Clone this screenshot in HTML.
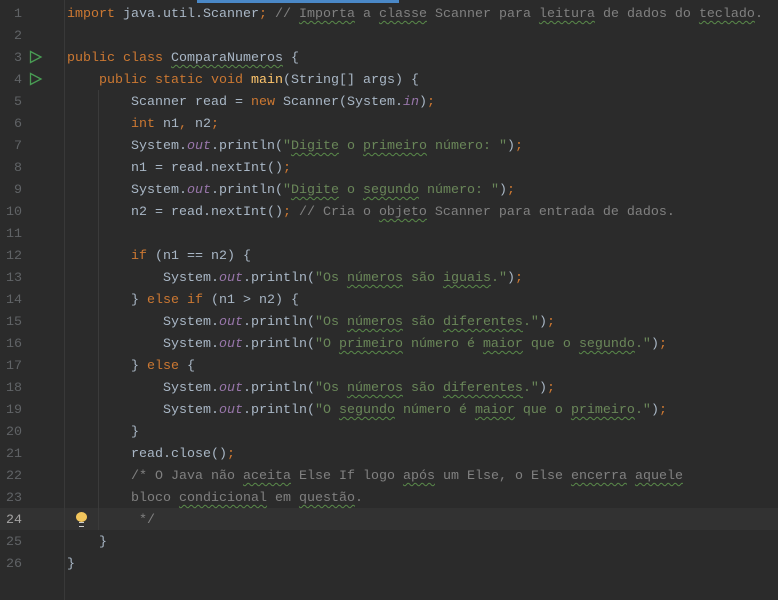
<!DOCTYPE html>
<html><head><meta charset="utf-8"><style>
body{margin:0;width:778px;height:600px;background:#2b2b2b;overflow:hidden;position:relative;font-family:"Liberation Mono",monospace;font-size:13.33px;color:#a9b7c6}
.bar{position:absolute;left:197px;top:0;width:202px;height:3px;background:#4a88c7}
.sep{position:absolute;left:64px;top:0;width:1px;height:600px;background:#393939}
.cur{position:absolute;left:0;top:508px;width:778px;height:22px;background:#323232}
.guide{position:absolute;width:1px;background:#3b3b3b}
.ln{position:absolute;left:0;width:22px;text-align:right;color:#606366;height:22px;line-height:22px}
.code{position:absolute;left:67px;top:4px;white-space:pre;line-height:22px}
.k{color:#cc7832}.s{color:#6a8759}.c{color:#808080}.o{color:#9876aa;font-style:italic}.m{color:#ffc66d}
.w{text-decoration:underline wavy #5a8a4a;text-decoration-thickness:1px;text-underline-offset:3px}
.run{position:absolute;left:29px}
.bulb{position:absolute;left:76px;top:512px;width:11px;height:10px;border-radius:50%;background:#f2c55c}
.bulb::after{content:"";position:absolute;left:3px;top:10px;width:5px;height:3px;border-top:1px solid #ccc;border-bottom:1px solid #ccc}
</style></head><body>
<div class="cur"></div>
<div class="bar"></div>
<div class="sep"></div>
<div class="guide" style="left:98px;top:90px;height:440px"></div>
<div style="position:absolute;top:2px;left:0">
<div class="ln" style="top:2px">1</div><div class="ln" style="top:24px">2</div><div class="ln" style="top:46px">3</div><div class="ln" style="top:68px">4</div><div class="ln" style="top:90px">5</div><div class="ln" style="top:112px">6</div><div class="ln" style="top:134px">7</div><div class="ln" style="top:156px">8</div><div class="ln" style="top:178px">9</div><div class="ln" style="top:200px">10</div><div class="ln" style="top:222px">11</div><div class="ln" style="top:244px">12</div><div class="ln" style="top:266px">13</div><div class="ln" style="top:288px">14</div><div class="ln" style="top:310px">15</div><div class="ln" style="top:332px">16</div><div class="ln" style="top:354px">17</div><div class="ln" style="top:376px">18</div><div class="ln" style="top:398px">19</div><div class="ln" style="top:420px">20</div><div class="ln" style="top:442px">21</div><div class="ln" style="top:464px">22</div><div class="ln" style="top:486px">23</div><div class="ln" style="top:508px;color:#a4a3a3">24</div><div class="ln" style="top:530px">25</div><div class="ln" style="top:552px">26</div>
</div>
<svg class="run" style="top:50px" width="14" height="14"><path d="M1.5 1.5 L12 7 L1.5 12.5 Z" fill="none" stroke="#499c54" stroke-width="1.3"/></svg>
<svg class="run" style="top:72px" width="14" height="14"><path d="M1.5 1.5 L12 7 L1.5 12.5 Z" fill="none" stroke="#499c54" stroke-width="1.3"/></svg>
<div class="bulb"></div>
<div class="code"><span class="k">import</span> java.util.Scanner<span class="k">;</span> <span class="c">// <span class="w">Importa</span> a <span class="w">classe</span> Scanner para <span class="w">leitura</span> de dados do <span class="w">teclado</span>.</span>

<span class="k">public class</span> <span class="w">ComparaNumeros</span> {
    <span class="k">public static void</span> <span class="m">main</span>(String[] args) {
        Scanner read = <span class="k">new</span> Scanner(System.<span class="o">in</span>)<span class="k">;</span>
        <span class="k">int</span> n1<span class="k">,</span> n2<span class="k">;</span>
        System.<span class="o">out</span>.println(<span class="s">"<span class="w">Digite</span> o <span class="w">primeiro</span> número: "</span>)<span class="k">;</span>
        n1 = read.nextInt()<span class="k">;</span>
        System.<span class="o">out</span>.println(<span class="s">"<span class="w">Digite</span> o <span class="w">segundo</span> número: "</span>)<span class="k">;</span>
        n2 = read.nextInt()<span class="k">;</span> <span class="c">// Cria o <span class="w">objeto</span> Scanner para entrada de dados.</span>

        <span class="k">if</span> (n1 == n2) {
            System.<span class="o">out</span>.println(<span class="s">"Os <span class="w">números</span> são <span class="w">iguais</span>."</span>)<span class="k">;</span>
        } <span class="k">else if</span> (n1 &gt; n2) {
            System.<span class="o">out</span>.println(<span class="s">"Os <span class="w">números</span> são <span class="w">diferentes</span>."</span>)<span class="k">;</span>
            System.<span class="o">out</span>.println(<span class="s">"O <span class="w">primeiro</span> número é <span class="w">maior</span> que o <span class="w">segundo</span>."</span>)<span class="k">;</span>
        } <span class="k">else</span> {
            System.<span class="o">out</span>.println(<span class="s">"Os <span class="w">números</span> são <span class="w">diferentes</span>."</span>)<span class="k">;</span>
            System.<span class="o">out</span>.println(<span class="s">"O <span class="w">segundo</span> número é <span class="w">maior</span> que o <span class="w">primeiro</span>."</span>)<span class="k">;</span>
        }
        read.close()<span class="k">;</span>
        <span class="c">/* O Java não <span class="w">aceita</span> Else If logo <span class="w">após</span> um Else, o Else <span class="w">encerra</span> <span class="w">aquele</span>
        bloco <span class="w">condicional</span> em <span class="w">questão</span>.
         */</span>
    }
}</div>
</body></html>
